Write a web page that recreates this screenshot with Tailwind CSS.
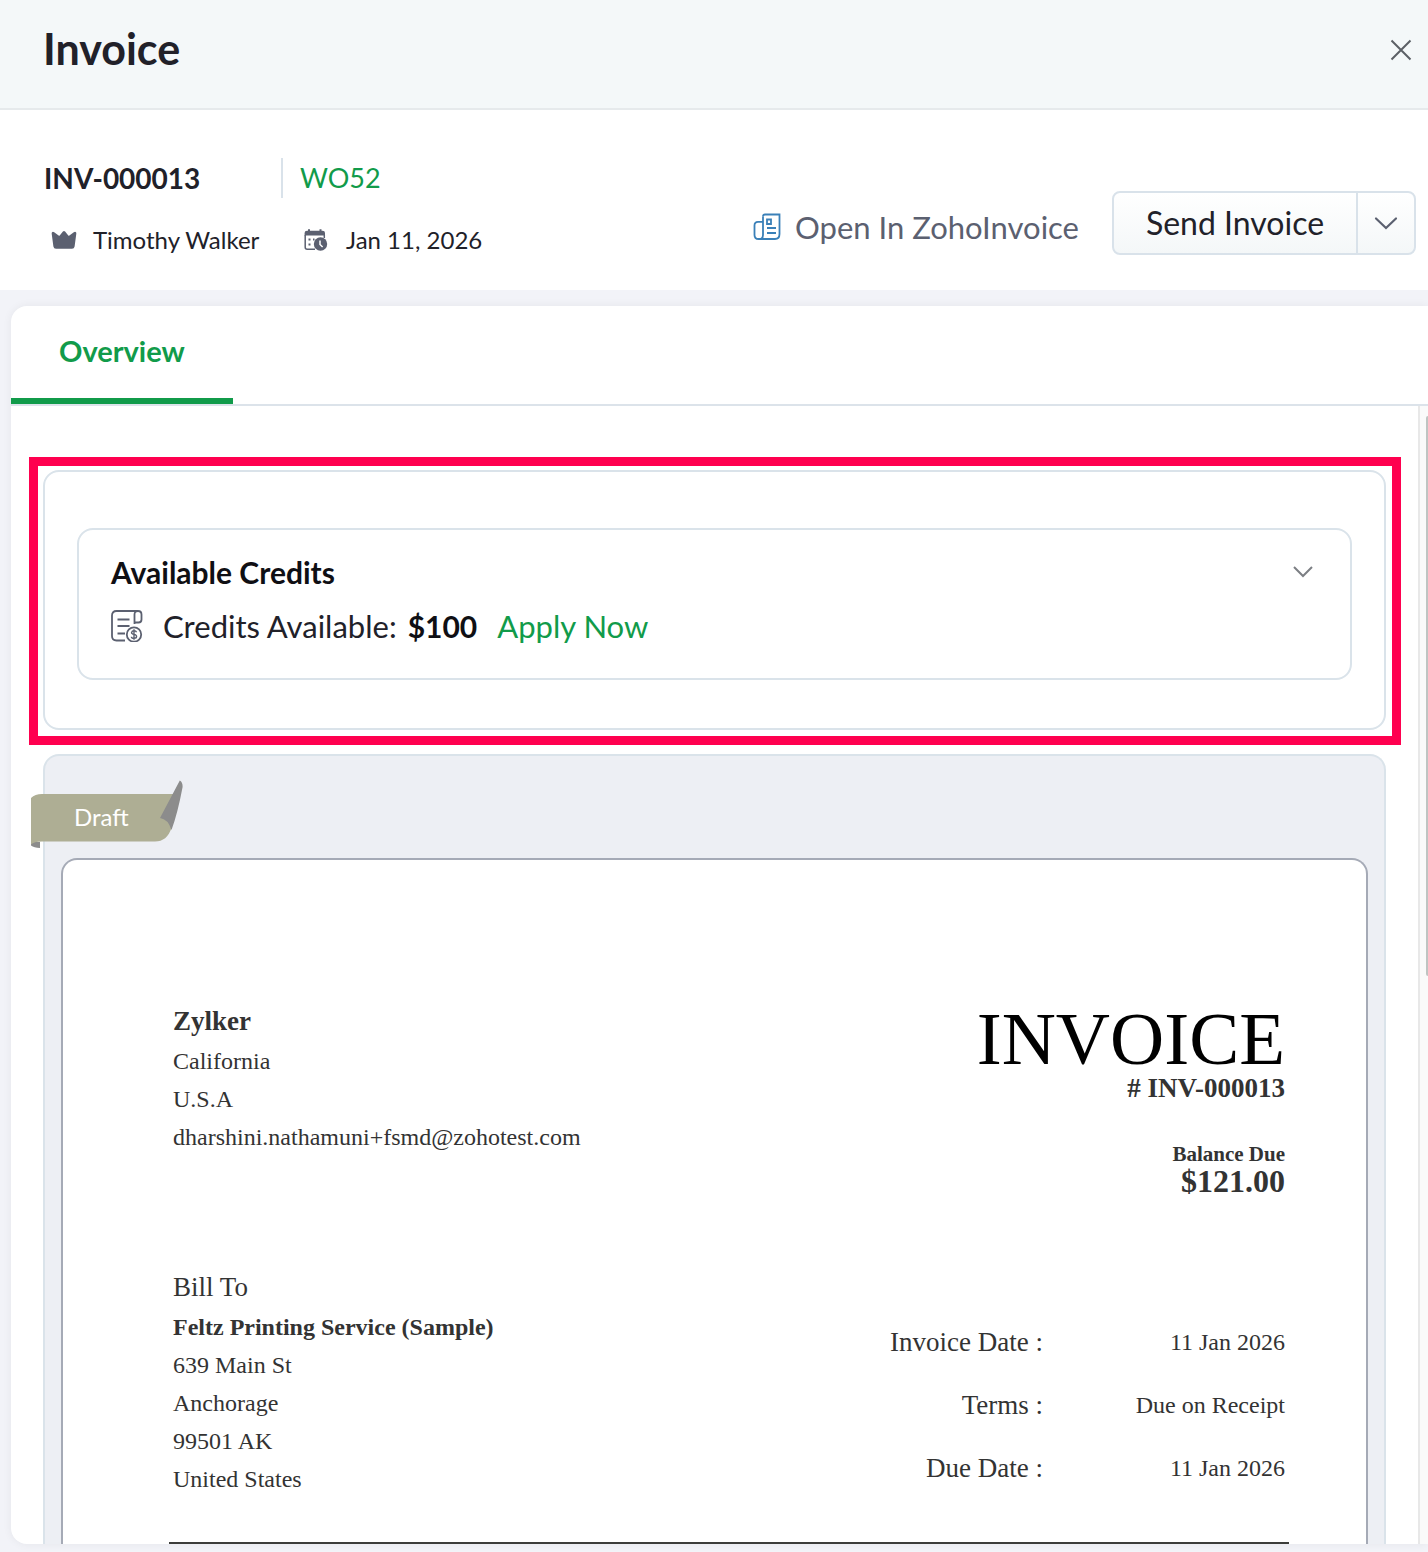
<!DOCTYPE html>
<html lang="en">
  <head>
    <meta charset="UTF-8" />
    <meta name="viewport" content="width=device-width, initial-scale=1.0" />
    <title>Invoice INV-000013</title>
    <script src="https://cdn.jsdelivr.net/npm/@tailwindcss/browser@4"></script>
  </head>
  <body class="flex h-screen flex-col overflow-hidden bg-[#f2f3f8] font-['Lato',sans-serif] text-[#212129]">
    <header class="flex h-[110px] shrink-0 items-start justify-between border-b-2 border-[#e6eaec] bg-[#f4f8f9] pt-6 pr-4 pl-[43px]">
      <h1 class="text-[43px] leading-[50px] font-bold">Invoice</h1>
      <button type="button" aria-label="Close" class="mt-[15px]">
        <svg class="size-[22px]" viewBox="0 0 22 22" fill="none" stroke="#5b6066" stroke-width="2"><path d="M1.5 1.5l19 19M20.5 1.5l-19 19" /></svg>
      </button>
    </header>

    <section class="flex h-[180px] shrink-0 justify-between bg-white pr-3 pl-11">
      <div class="pt-12">
        <div class="flex h-10 items-center">
          <h2 class="w-[237px] text-[28px] font-bold">INV-000013</h2>
          <a href="#" class="flex h-10 items-center border-l-2 border-[#d9e2ea] pl-[17px] text-[27px] text-[#119b4a]">WO52</a>
        </div>
        <div class="mt-[26px] flex h-8 items-center text-2xl">
          <svg class="mr-4 ml-[7px] h-[18px] w-[26px]" viewBox="0 0 26 18" fill="#5b6070"><path d="M1 1.2Q1.800.3 3.200 1.200L7.600 4.600Q8.200 5 8.700 4.400L11.900.6Q13-.4 14.100.6L17.300 4.400Q17.800 5 18.400 4.600L22.800 1.200Q24.200.3 25 1.200Q25.500 2 25.200 3.500L23.600 15.500Q23.200 17.800 21 17.800H5Q2.800 17.800 2.400 15.500L.8 3.500Q.5 2 1 1.200Z" /></svg>
          <span class="w-[211px]">Timothy Walker</span>
          <svg class="mr-[18px] h-[22px] w-6" viewBox="0 0 24 22" fill="none">
            <path d="M1.200 6V18.300Q1.200 20.300 3.200 20.300H11M20.300 6V9" stroke="#5b6070" stroke-width="1.500" />
            <path d="M.6 6.500V4Q.6 1.700 3 1.700H4V.3H6V1.700H15.500V.3H17.500V1.700H18.500Q21 1.700 21 4V6.500Z" fill="#5b6070" />
            <path d="M4.500 9.500h2v2h-2zM4.500 14.500h2v2h-2zM9 9.500h1.500v2h-1.500z" fill="#5b6070" />
            <circle cx="16.500" cy="15" r="6.700" fill="#5b6070" />
            <path d="M16 11.500V15.500L18.600 18" stroke="#fff" stroke-width="1.500" />
          </svg>
          <span>Jan 11, 2026</span>
        </div>
      </div>
      <div class="flex items-start pt-[81px]">
        <a href="#" class="mt-[18px] mr-[33px] flex items-center text-[31px] leading-9 text-[#5b6070]">
          <svg class="mr-3.5 h-7 w-7" viewBox="0 0 28 28" fill="none" stroke="#3a80b8" stroke-width="1.800">
            <path d="M10 3.500Q10 1.500 12 1.500H26.500V21Q26.500 26 22 26H5.500Q1.500 26 1.500 22V12.500Q1.500 8.800 5 8.800H10" />
            <path d="M10 3.500V22Q10 26 6.500 26" />
            <path d="M14 6.500h4v4.500h-4zM14 15h9M14 20h9" />
          </svg>
          Open In ZohoInvoice
        </a>
        <div class="flex h-16 rounded-lg border-2 border-[#d9e2ea] bg-linear-to-b from-white to-[#f4f7f8]">
          <button type="button" class="w-[242px] text-[32px]">Send Invoice</button>
          <button type="button" aria-label="More actions" class="flex w-[58px] items-center justify-center border-l-2 border-[#d9e2ea]">
            <svg class="h-3.5 w-6" viewBox="0 0 24 14" fill="none" stroke="#5b6070" stroke-width="2.200" stroke-linecap="round"><path d="M2 2.500l10 9.500L22 2.500" /></svg>
          </button>
        </div>
      </div>
    </section>

    <main class="mt-4 mb-2 ml-[11px] flex min-h-0 flex-1 flex-col overflow-hidden rounded-l-2xl bg-white shadow-[0_0_10px_rgba(0,0,0,0.06)]">
      <nav class="flex h-[100px] shrink-0 border-b-2 border-[#dce3ea]">
        <a href="#" class="w-[222px] border-b-6 border-[#119b4a] pt-[27px] pl-12 text-[29px] leading-9 font-bold text-[#119b4a]">Overview</a>
      </nav>

      <div class="flex min-h-0 flex-1">
        <div class="min-w-0 flex-1 overflow-hidden">
          <!-- highlighted credits panel -->
          <div class="mt-[51px] mr-[17px] ml-[18px] border-[9px] border-[#ff004f] pt-1 pr-1.5 pb-1.5 pl-[5px]">
            <div class="rounded-2xl border-2 border-[#dae3ea] px-8 pt-14 pb-12">
              <section class="h-[152px] rounded-2xl border-2 border-[#dae3ea] pt-[22px] pr-[37px] pl-8">
                <div class="flex items-center justify-between">
                  <h3 class="text-[30px] leading-10 font-bold text-[#0f0f14]">Available Credits</h3>
                  <button type="button" aria-label="Toggle credits">
                    <svg class="h-3 w-5" viewBox="0 0 20 12" fill="none" stroke="#7c7f84" stroke-width="2"><path d="M1 1l9 9 9-9" /></svg>
                  </button>
                </div>
                <div class="mt-3.5 flex h-10 items-center text-[31px]">
                  <svg class="mr-5 h-8 w-8 shrink-0" viewBox="0 0 32 32" fill="none" stroke="#5b6070" stroke-width="1.800">
                    <path d="M27 1H5.500Q1 1 1 5.500V26Q1 30.500 5.500 30.500H14" />
                    <path d="M23.500 14V4.500Q23.500 1 27 1T30.500 4.500V9.500Q30.500 12.500 27.500 12.500H23.500" />
                    <path d="M6.500 9.500H18.500M6.500 16H18.500M6.500 23.500H14" />
                    <circle cx="23" cy="24.500" r="7.200" />
                    <path stroke-width="1.400" d="M25.600 22.200Q25 20.800 23 20.800T20.500 22.600Q20.500 24 23 24.400T25.600 26.500Q25.600 28.300 23 28.300T20.400 26.700M23 19.300V29.800" />
                  </svg>
                  <span>Credits Available:</span>
                  <strong class="ml-[11px] text-[30px] font-bold text-[#0f0f14]">$100</strong>
                  <button type="button" class="ml-5 text-[#119b4a]">Apply Now</button>
                </div>
              </section>
            </div>
          </div>

          <!-- invoice preview -->
          <div class="relative mt-[9px] mr-8 ml-8 rounded-t-2xl border-2 border-b-0 border-[#dae3ea] bg-[#edeff4] px-4 pt-[102px]">
            <div class="absolute top-6 -left-3.5 h-[70px] w-[154px]">
              <svg class="absolute inset-0" viewBox="0 0 154 70" fill="none">
                <path d="M0 62H9V68Q3 67.500 0 65.500Z" fill="#8c8c8c" />
                <path d="M0 18Q4 14 11 14H143L140.500 48Q136 61.500 124 61.500H11Q3 61.500 0 64.500Z" fill="#aeae94" />
                <path d="M148.800.4L129 38Q137 39 140.500 50Q146.500 34 151.600 7Q151.800 2 148.800.4Z" fill="#8c8c8c" />
              </svg>
              <span class="relative block pt-[19px] pl-[43px] text-2xl leading-9 text-white">Draft</span>
            </div>

            <article class="rounded-t-2xl border-2 border-b-0 border-[#a5aab6] bg-white pt-[142px] pr-[77px] pb-20 pl-[106px] font-['Liberation_Serif',serif] text-2xl text-[#333]">
              <div class="flex justify-between px-1">
                <address class="leading-[38px] not-italic">
                  <b class="mb-0.5 block text-[27px]">Zylker</b>
                  California<br />
                  U.S.A<br />
                  dharshini.nathamuni+fsmd@zohotest.com
                </address>
                <div class="text-right font-bold">
                  <h2 class="text-[75px] leading-[74px] font-normal text-black">INVOICE</h2>
                  <p class="text-[27px] leading-6"># INV-000013</p>
                  <p class="mt-10 text-[21px] leading-7">Balance Due</p>
                  <p class="text-[32px] leading-[26px]">$121.00</p>
                </div>
              </div>

              <div class="mt-[74px] flex items-start justify-between px-1">
                <address class="leading-[38px] not-italic">
                  <span class="mb-0.5 block text-[27px]">Bill To</span>
                  <b class="block">Feltz Printing Service (Sample)</b>
                  639 Main St<br />
                  Anchorage<br />
                  99501 AK<br />
                  United States
                </address>
                <table class="mt-[43px] text-right leading-[63px]">
                  <tbody>
                    <tr>
                      <th scope="row" class="p-0 text-right text-[27px] font-normal">Invoice Date :</th>
                      <td class="w-[242px] p-0">11 Jan 2026</td>
                    </tr>
                    <tr>
                      <th scope="row" class="p-0 text-right text-[27px] font-normal">Terms :</th>
                      <td class="p-0">Due on Receipt</td>
                    </tr>
                    <tr>
                      <th scope="row" class="p-0 text-right text-[27px] font-normal">Due Date :</th>
                      <td class="p-0">11 Jan 2026</td>
                    </tr>
                  </tbody>
                </table>
              </div>
              <hr class="mt-[42px] border-t-2 border-[#3c3d3a]" />
            </article>
          </div>
        </div>
        <div class="w-2.5 shrink-0 border-l-2 border-[#e8e8e8] bg-[#fafafa] pt-2.5 pl-1.5">
          <div class="h-[560px] rounded-l-lg bg-[#bfc4c2]"></div>
        </div>
      </div>
    </main>
  </body>
</html>
